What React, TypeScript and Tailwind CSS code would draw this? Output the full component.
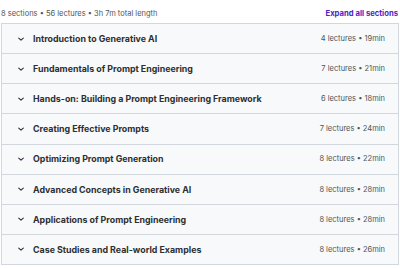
import React from "react";

const sections = [
  ["Introduction to Generative AI", "4 lectures • 19min"],
  ["Fundamentals of Prompt Engineering", "7 lectures • 21min"],
  ["Hands-on: Building a Prompt Engineering Framework", "6 lectures • 18min"],
  ["Creating Effective Prompts", "7 lectures • 24min"],
  ["Optimizing Prompt Generation", "8 lectures • 22min"],
  ["Advanced Concepts in Generative AI", "8 lectures • 28min"],
  ["Applications of Prompt Engineering", "8 lectures • 28min"],
  ["Case Studies and Real-world Examples", "8 lectures • 26min"],
];

function Chevron() {
  return (
    <svg width="8" height="8" viewBox="0 0 8 8" fill="none">
      <path d="M1.7 3.1 L4 5.2 L6.3 3.1" stroke="#2d2f31" strokeWidth="1.1" strokeLinecap="round" strokeLinejoin="round" />
    </svg>
  );
}

export default function App() {
  return (
    <div className="w-[400px] h-[268px] bg-white" style={{ fontFamily: "Inter, 'Noto Sans', sans-serif" }}>
      <div className="flex items-center justify-between h-[23px] pl-[1px] pr-[2px] pt-[4px]">
        <span className="text-[7.5px] text-[#505457]">8 sections • 56 lectures • 3h 7m total length</span>
        <span className="text-[7.7px] font-bold text-[#5022c3]">Expand all sections</span>
      </div>
      <div className="ml-[1px] w-[398px] h-[242px] flex flex-col border border-[#d1d7dc]">
        {sections.map(([t, m], i) => (
          <div
            key={i}
            className={`flex flex-1 items-center bg-[#f7f9fa] pl-[15px] pr-[13px] ${i > 0 ? "border-t border-[#d1d7dc]" : ""}`}
          >
            <Chevron />
            <span className="ml-[8px] text-[8.85px] font-bold text-[#2d2f31] flex-1">{t}</span>
            <span className="text-[7.5px] text-[#505457]">{m}</span>
          </div>
        ))}
      </div>
    </div>
  );
}
